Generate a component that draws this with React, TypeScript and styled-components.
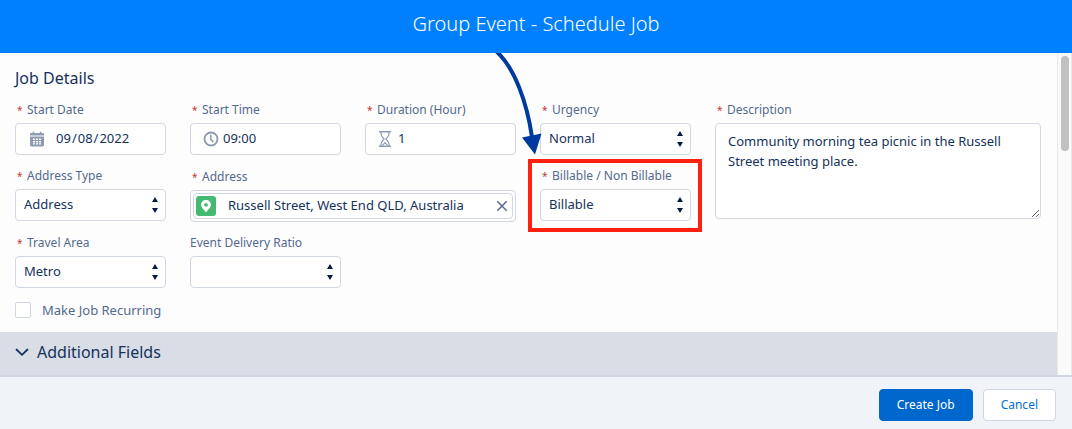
import React from "react";
import styled, { createGlobalStyle, css } from "styled-components";

const GlobalStyle = createGlobalStyle`
  *, *::before, *::after { box-sizing: border-box; }
  body {
    margin: 0;
    background: #f0f4f8;
    color: #16325c;
    font-family: "Noto Sans", "Open Sans", sans-serif;
    font-size: 13px;
    line-height: 20px;
  }
  input, select, textarea, button { font: inherit; color: inherit; }
`;

const Header = styled.header`
  display: flex;
  align-items: center;
  justify-content: center;
  height: 53px;
  padding-bottom: 6px;
  background: #0080ff;
  color: #fff;
`;

const Title = styled.h1`
  margin: 0;
  font-size: 20px;
  font-weight: 300;
  line-height: 28px;
`;

const Body = styled.main`
  display: flex;
  overflow: hidden;
  background: #fdfdfd;
`;

const Content = styled.form`
  flex: 1;
  min-width: 0;
`;

const Section = styled.section`
  padding: 13px 16px 13px 15px;
`;

const SectionTitle = styled.h2`
  margin: 0 0 10px;
  font-size: 16px;
  font-weight: 400;
  line-height: 24px;
`;

const FieldGrid = styled.div`
  display: grid;
  grid-template-columns: repeat(6, minmax(0, 1fr));
  align-items: start;
  gap: 11px 24px;
`;

const Field = styled.div<{ $cols?: number; $rows?: number; $nudged?: boolean }>`
  position: relative;
  grid-column: span ${(p) => p.$cols ?? 1};
  grid-row: span ${(p) => p.$rows ?? 1};
  padding-top: ${(p) => (p.$nudged ? 1 : 0)}px;
`;

const Label = styled.label`
  display: flex;
  margin-bottom: 3px;
  color: #54698d;
  font-size: 12px;
  line-height: 20px;
  white-space: nowrap;
`;

const Asterisk = styled.span`
  width: 10px;
  margin-left: 2px;
  color: #c23934;
  font-size: 10px;
`;

const box = css`
  border: 1px solid #d0d6e2;
  border-radius: 4px;
  background: #fff;
`;

const Control = styled.div<{ $padding?: string; $gap?: number }>`
  ${box}
  display: flex;
  align-items: center;
  gap: ${(p) => p.$gap ?? 0}px;
  height: 32px;
  padding: ${(p) => p.$padding ?? "0"};
  svg { flex: none; }
`;

const TextInput = styled.input`
  flex: 1;
  min-width: 0;
  height: 22px;
  padding: 0 0 2px;
  border: 0;
  outline: 0;
  background: transparent;
  &::-webkit-calendar-picker-indicator { display: none; }
`;

const LookupBox = styled.div`
  ${box}
  display: flex;
  align-items: center;
  flex: 1;
  gap: 12px;
  height: 26px;
  padding: 0 4px 0 2px;
`;

const ClearButton = styled.button`
  display: flex;
  padding: 0;
  border: 0;
  background: none;
  color: #54698d;
`;

const SelectWrap = styled.div`
  position: relative;
  svg {
    position: absolute;
    top: 8px;
    right: 8px;
    pointer-events: none;
  }
`;

const SelectBox = styled.select`
  ${box}
  display: block;
  width: 100%;
  height: 32px;
  padding: 0 24px 2px 8px;
  appearance: none;
`;

const TextArea = styled.textarea`
  ${box}
  display: block;
  width: 100%;
  height: 96px;
  padding: 7px 12px;
  resize: vertical;
`;

const Highlight = styled.div`
  position: absolute;
  inset: -7px -11px -11px -12px;
  border: 4px solid #ff2010;
  pointer-events: none;
`;

const Arrow = styled.svg`
  position: absolute;
  top: -114px;
  left: -50px;
  pointer-events: none;
`;

const CheckLabel = styled.label`
  display: flex;
  align-items: center;
  gap: 11px;
  width: max-content;
  margin-top: 13px;
  color: #54698d;
  line-height: 18px;
`;

const CheckBox = styled.input`
  appearance: none;
  width: 16px;
  height: 16px;
  margin: 0;
  border: 1px solid #d0d6e2;
  border-radius: 2px;
  background: #fff;
`;

const Accordion = styled.button`
  display: flex;
  align-items: center;
  gap: 8px;
  width: 100%;
  height: 43px;
  padding: 0 15px 3px;
  border: 0;
  background: #d8dde6;
  font-size: 16px;
  line-height: 24px;
`;

const Track = styled.div`
  flex: none;
  width: 15px;
  padding: 3px 3px 0;
  border: solid #e8e8e8;
  border-width: 0 1px;
  background: #fafafa;
`;

const Thumb = styled.div`
  width: 8px;
  height: 95px;
  border-radius: 4px;
  background: #c1c1c1;
`;

const Footer = styled.footer`
  display: flex;
  justify-content: flex-end;
  gap: 10px;
  padding: 12px 16px 8px;
  border-top: 2px solid #d0d6e2;
`;

const Button = styled.button<{ $primary?: boolean }>`
  height: 32px;
  padding: 0 17px;
  border: 1px solid ${(p) => (p.$primary ? "#0067cc" : "#d0d6e2")};
  border-radius: 4px;
  background: ${(p) => (p.$primary ? "#0067cc" : "#fff")};
  color: ${(p) => (p.$primary ? "#fff" : "#0070d2")};
  font-size: 12px;
`;

function FieldLabel({ id, text, required = true }: { id: string; text: string; required?: boolean }) {
  return (
    <Label htmlFor={id}>
      {required && <Asterisk>*</Asterisk>}
      {text}
    </Label>
  );
}

function Select({ id, options }: { id: string; options: string[] }) {
  return (
    <SelectWrap>
      <SelectBox id={id}>
        {options.map((o) => (
          <option key={o}>{o}</option>
        ))}
      </SelectBox>
      <svg width="6" height="16" viewBox="0 0 6 16" fill="#061c3f" aria-hidden="true">
        <path d="M3 0 6 5H0zM3 16 0 11h6z" />
      </svg>
    </SelectWrap>
  );
}

const CalendarIcon = () => (
  <svg width="14" height="16" viewBox="0 0 14 16" aria-hidden="true">
    <path
      fill="#8e9bb0"
      fillRule="evenodd"
      d="M2.600.8h1.600v1.300h5.600V.8h1.600v1.300H13c.6 0 1 .4 1 1v1.300H0V3.100c0-.6.4-1 1-1h1.600zM0 5.500h14V14c0 .800-.6 1.400-1.400 1.400H1.400C.6 15.400 0 14.800 0 14zM3 7.400v1.500h2V7.400zm3 0v1.500h2V7.400zm3 0v1.500h2V7.400zM3 9.900v1.500h2V9.900zm3 0v1.500h2V9.900zm3 0v1.500h2V9.900zM3 12.300v1.300h2v-1.300zm3 0v1.300h2v-1.300zm3 0v1.300h2v-1.300z"
    />
  </svg>
);

const ClockIcon = () => (
  <svg width="16" height="16" viewBox="0 0 16 16" fill="none" stroke="#8e9bb0" aria-hidden="true">
    <circle cx="8" cy="8" r="6.500" strokeWidth="1.900" />
    <path d="M7.700 4.200v4l2.200 2.400" strokeWidth="1.600" strokeLinecap="round" />
  </svg>
);

const HourglassIcon = () => (
  <svg width="12" height="16" viewBox="0 0 12 16" fill="none" stroke="#8e9bb0" aria-hidden="true">
    <path d="M0 .8h12M0 15.200h12" strokeWidth="1.400" />
    <path d="M1.800 1c0 3.500.8 4.700 3.300 7-2.500 2.300-3.300 3.500-3.300 7M10.200 1c0 3.500-.8 4.700-3.300 7 2.500 2.300 3.300 3.500 3.300 7M3.300 14.600 6 11.600l2.700 3" strokeWidth="1.100" />
  </svg>
);

const PinIcon = () => (
  <svg width="20" height="20" viewBox="0 0 20 20" aria-hidden="true">
    <rect width="20" height="20" rx="3" fill="#44b972" />
    <path
      fill="#fff"
      fillRule="evenodd"
      d="M10 4c-2.800 0-4.900 2.100-4.900 4.800 0 3 2.900 4.700 4.300 7 .3.500.9.500 1.200 0 1.400-2.300 4.300-4 4.300-7C14.900 6.100 12.800 4 10 4zm0 2.900a1.900 1.900 0 1 1 0 3.800 1.900 1.900 0 0 1 0-3.800z"
    />
  </svg>
);

export default function App() {
  return (
    <>
      <GlobalStyle />
      <Header>
        <Title>Group Event - Schedule Job</Title>
      </Header>
      <Body>
        <Content id="job-form" onSubmit={(e) => e.preventDefault()}>
          <Section>
            <SectionTitle>Job Details</SectionTitle>
            <FieldGrid>
              <Field>
                <FieldLabel id="start-date" text="Start Date" />
                <Control $padding="0 8px 0 14px" $gap={11}>
                  <CalendarIcon />
                  <TextInput type="date" id="start-date" defaultValue="2022-09-08" />
                </Control>
              </Field>
              <Field>
                <FieldLabel id="start-time" text="Start Time" />
                <Control $padding="0 8px 0 12px" $gap={4}>
                  <ClockIcon />
                  <TextInput id="start-time" defaultValue="09:00" />
                </Control>
              </Field>
              <Field>
                <FieldLabel id="duration" text="Duration (Hour)" />
                <Control $padding="0 8px 0 13px" $gap={7}>
                  <HourglassIcon />
                  <TextInput id="duration" defaultValue="1" />
                </Control>
              </Field>
              <Field>
                <FieldLabel id="urgency" text="Urgency" />
                <Select id="urgency" options={["Normal"]} />
              </Field>
              <Field $cols={2} $rows={2}>
                <FieldLabel id="description" text="Description" />
                <TextArea
                  id="description"
                  defaultValue="Community morning tea picnic in the Russell Street meeting place."
                />
              </Field>
              <Field>
                <FieldLabel id="address-type" text="Address Type" />
                <Select id="address-type" options={["Address"]} />
              </Field>
              <Field $cols={2} $nudged>
                <FieldLabel id="address" text="Address" />
                <Control $padding="0 2px">
                  <LookupBox>
                    <PinIcon />
                    <TextInput id="address" defaultValue="Russell Street, West End QLD, Australia" />
                    <ClearButton type="button" aria-label="Clear address">
                      <svg width="12" height="12" viewBox="0 0 12 12" stroke="currentColor" strokeWidth="1.500" aria-hidden="true">
                        <path d="m1.300 1.300 9.400 9.400M10.700 1.300l-9.400 9.400" />
                      </svg>
                    </ClearButton>
                  </LookupBox>
                </Control>
              </Field>
              <Field>
                <FieldLabel id="billable" text="Billable / Non Billable" />
                <Select id="billable" options={["Billable"]} />
                <Highlight />
                <Arrow width="60" height="104" viewBox="490 52 60 104" aria-hidden="true">
                  <path d="M496 51C515 68 527 103 532 137" fill="none" stroke="#003a9f" strokeWidth="4" />
                  <path d="M522 137.500 541.500 133.500 535 154.500z" fill="#003a9f" />
                </Arrow>
              </Field>
              <Field>
                <FieldLabel id="travel-area" text="Travel Area" />
                <Select id="travel-area" options={["Metro"]} />
              </Field>
              <Field>
                <FieldLabel id="ratio" text="Event Delivery Ratio" required={false} />
                <Select id="ratio" options={[""]} />
              </Field>
            </FieldGrid>
            <CheckLabel>
              <CheckBox type="checkbox" />
              Make Job Recurring
            </CheckLabel>
          </Section>
          <Accordion type="button">
            <svg width="14" height="14" viewBox="0 0 14 14" fill="none" stroke="currentColor" strokeWidth="1.800" aria-hidden="true">
              <path d="m1.500 4.500 5.500 5.300 5.500-5.300" strokeLinecap="round" strokeLinejoin="round" />
            </svg>
            Additional Fields
          </Accordion>
        </Content>
        <Track>
          <Thumb />
        </Track>
      </Body>
      <Footer>
        <Button $primary type="submit" form="job-form">Create Job</Button>
        <Button type="button">Cancel</Button>
      </Footer>
    </>
  );
}
